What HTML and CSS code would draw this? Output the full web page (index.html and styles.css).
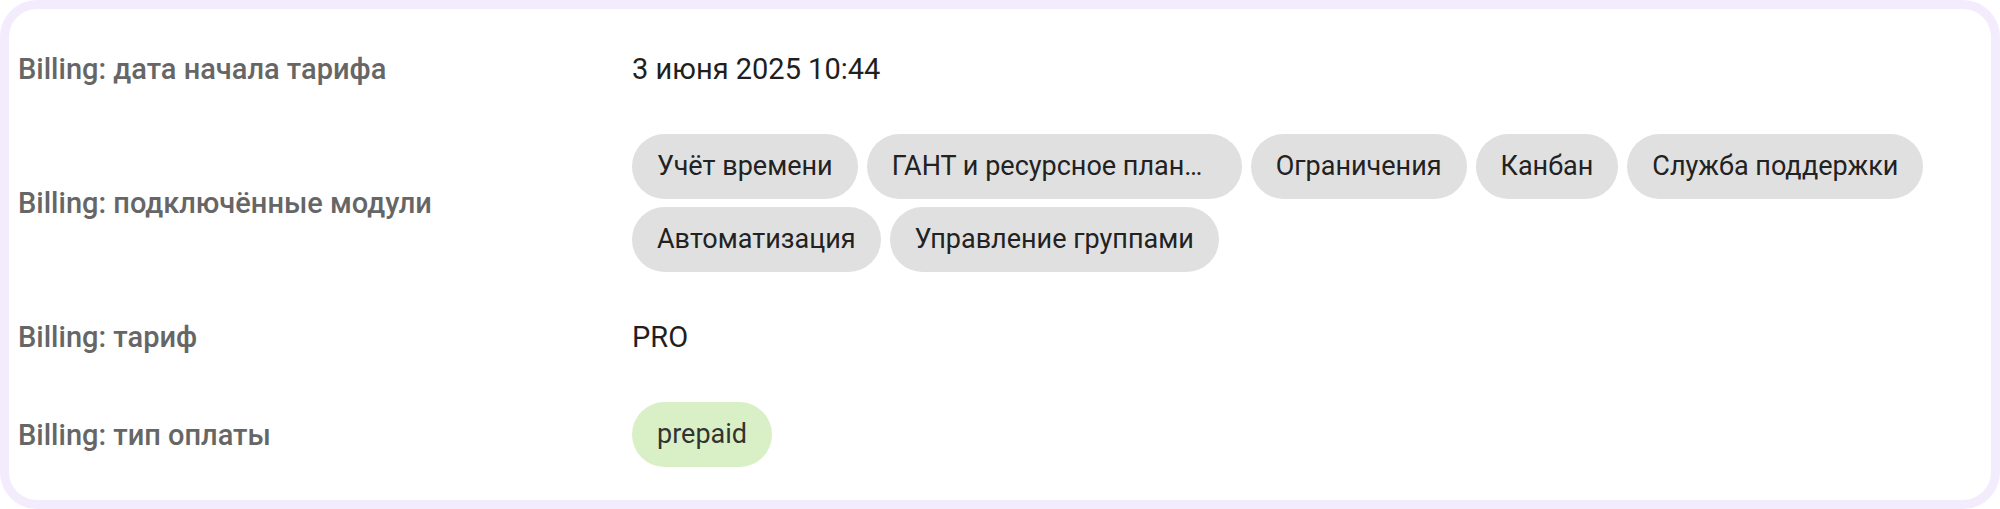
FILE: index.html
```html
<!DOCTYPE html>
<html lang="ru">
<head>
<meta charset="utf-8">
<title>Billing</title>
<link rel="stylesheet" href="styles.css">
</head>
<body>
<div class="card">
  <div class="grid">
    <div class="label">Billing: дата начала тарифа</div>
    <div class="value">3 июня 2025 10:44</div>

    <div class="label">Billing: подключённые модули</div>
    <div class="value chips">
      <span class="chip">Учёт времени</span>
      <span class="chip chip-limited">ГАНТ и ресурсное планирование</span>
      <span class="chip">Ограничения</span>
      <span class="chip">Канбан</span>
      <span class="chip">Служба поддержки</span>
      <span class="chip">Автоматизация</span>
      <span class="chip">Управление группами</span>
    </div>

    <div class="label">Billing: тариф</div>
    <div class="value">PRO</div>

    <div class="label">Billing: тип оплаты</div>
    <div class="value chips">
      <span class="chip chip-green">prepaid</span>
    </div>
  </div>
</div>
</body>
</html>
```

FILE: styles.css
```css
* { box-sizing: border-box; }

html, body {
  margin: 0;
  padding: 0;
  background: #ffffff;
}

body {
  font-family: Roboto, "Noto Sans", Arial, sans-serif;
  width: 2000px;
  height: 509px;
}

.card {
  width: 2000px;
  height: 509px;
  border: 9px solid #f3ecfd;
  border-radius: 37px;
  background: #ffffff;
  padding: 28px 18px 32px 9px;
}

.grid {
  display: grid;
  grid-template-columns: 614px 1fr;
  grid-auto-rows: minmax(64px, auto);
  row-gap: 33px;
  align-items: center;
}

.label {
  font-size: 29px;
  font-weight: 500;
  color: #666666;
  white-space: nowrap;
}

.value {
  font-size: 29px;
  font-weight: 400;
  color: #1f1f1f;
}

.chips {
  display: flex;
  flex-wrap: wrap;
  gap: 8px 9px;
}

.chip {
  display: inline-block;
  height: 65px;
  line-height: 65px;
  padding: 0 25px;
  border-radius: 33px;
  background: #e0e0e0;
  color: #222222;
  font-size: 27px;
  white-space: nowrap;
}

.chip-limited {
  max-width: 375px;
  overflow: hidden;
  text-overflow: ellipsis;
}

.chip-green {
  background: #d9f0c7;
  color: #333333;
}
```
